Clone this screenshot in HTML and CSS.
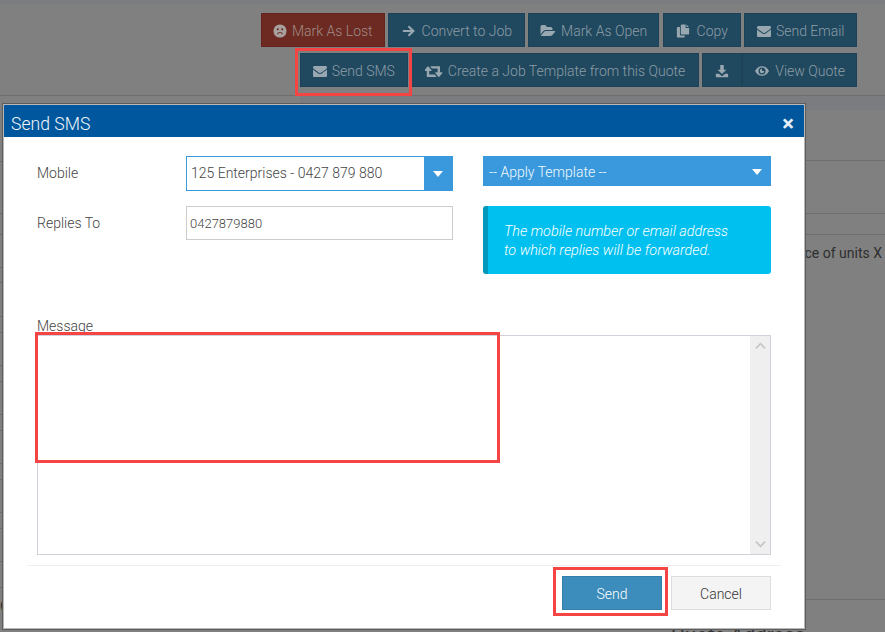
FILE: index.html
```html
<!DOCTYPE html>
<html lang="en">
<head>
<meta charset="utf-8">
<title>Send SMS</title>
<link rel="stylesheet" href="styles.css">
</head>
<body>
<svg class="defs" width="0" height="0" aria-hidden="true">
  <symbol id="i-env" viewBox="0 0 1792 1792"><path d="M1792 710v794q0 66-47 113t-113 47h-1472q-66 0-113-47t-47-113v-794q44 49 101 87 362 246 497 345 57 42 92.5 65.5t94.5 48 110 24.5h2q51 0 110-24.5t94.5-48 92.5-65.5q170-123 498-345 57-39 100-87zm0-294q0 79-49 151t-122 123q-376 261-468 325-10 7-42.5 30.5t-54 38-52 32.5-57.5 27-50 9h-2q-23 0-50-9t-57.5-27-52-32.5-54-38-42.5-30.5q-91-64-262-182.5t-205-142.5q-62-42-117-115.5t-55-136.5q0-78 41.5-130t118.5-52h1472q65 0 112.5 47t47.5 113z"/></symbol>
  <symbol id="i-folder" viewBox="0 0 1920 1792"><path d="M1879 952q0 31-31 66l-336 396q-43 51-120.5 86.5t-143.5 35.5h-1088q-34 0-60.5-13t-26.5-43q0-31 31-66l336-396q43-51 120.5-86.5t143.5-35.5h1088q34 0 60.5 13t26.5 43zm-343-344v160h-832q-94 0-197 47.5t-164 119.5l-337 396-5 6q0-4-.5-12.5t-.5-12.5v-960q0-92 66-158t158-66h320q92 0 158 66t66 158v32h544q92 0 158 66t66 158z"/></symbol>
</svg>

<div class="page">
  <div class="top-strip"></div>
  <div class="toolbar">
    <div class="btn-row">
      <a class="btn btn-red">
        <svg class="ic" viewBox="0 0 16 16"><path fill-rule="evenodd" d="M8 .5a7.500 7.500 0 1 1 0 15A7.500 7.500 0 0 1 8 .5zM5.500 4.800a1.200 1.200 0 1 0 0 2.400 1.200 1.200 0 0 0 0-2.400zm5 0a1.200 1.200 0 1 0 0 2.400 1.200 1.200 0 0 0 0-2.400zM4.600 11.300l1 .4C6.100 10.800 7 10.300 8 10.300s1.900.5 2.400 1.400l1-.4C10.800 10 9.500 9.200 8 9.200s-2.800.8-3.400 2.100z"/></svg>
        Mark As Lost</a>
      <a class="btn btn-convert">
        <svg class="ic ic-arrow" viewBox="0 0 16 16"><path d="M8.200 1.800 14.800 8l-6.600 6.200-1.600-1.600L10 9.200H1V6.800h9L6.600 3.400z"/></svg>
        Convert to Job</a>
      <a class="btn btn-open"><svg class="ic ic-wide"><use href="#i-folder"/></svg>Mark As Open</a>
      <a class="btn btn-copy">
        <svg class="ic" viewBox="0 0 16 16"><path d="M1 4.500a1 1 0 0 1 1-1h2.500V12a1 1 0 0 0 1 1H10v1.500a1 1 0 0 1-1 1H2a1 1 0 0 1-1-1zM5.500 1.500a1 1 0 0 1 1-1H11v4h4V11a1 1 0 0 1-1 1H6.500a1 1 0 0 1-1-1zM12 .7 14.800 3.500H12z"/></svg>
        Copy</a>
      <a class="btn btn-email"><svg class="ic"><use href="#i-env"/></svg>Send Email</a>
    </div>
    <div class="btn-row">
      <a class="btn"><svg class="ic"><use href="#i-env"/></svg>Send SMS</a>
      <a class="btn btn-template">
        <svg class="ic ic-retweet" viewBox="0 256 1920 1280"><path d="M1216 1504q0 13-9.500 22.500t-22.500 9.500h-960q-8 0-13.500-2t-9-7-5.500-8-3-11.500-1-11.500v-600h-192q-26 0-45-19t-19-45q0-24 15-41l320-384q19-22 49-22t49 22l320 384q15 17 15 41 0 26-19 45t-45 19h-192v384h576q16 0 25 11l160 192q7 10 7 21zm640-416q0 24-15 41l-320 384q-20 23-49 23t-49-23l-320-384q-15-17-15-41 0-26 19-45t45-19h192v-384h-576q-16 0-25-12l-160-192q-7-9-7-20 0-13 9.500-22.500t22.500-9.500h960q8 0 13.500 2t9 7 5.500 8.500 3 11.500 1 11v600h192q26 0 45 19t19 45z"/></svg>
        Create a Job Template from this Quote</a>
      <div class="btn-group">
        <a class="btn btn-icon">
          <svg class="ic" viewBox="0 0 16 16"><path d="M6 1h4v5.500h3L8 11.500 3 6.500h3zM1 11h3.500L8 14l3.500-3H15v4H1z"/></svg>
        </a>
        <a class="btn btn-view">
          <svg class="ic ic-wide" viewBox="0 0 16 16"><path fill-rule="evenodd" d="M8 2.500c3.400 0 6.300 2.200 8 5.500-1.700 3.300-4.600 5.500-8 5.500S1.700 11.300 0 8c1.700-3.300 4.600-5.500 8-5.500zm0 1.500a4 4 0 1 0 0 8 4 4 0 0 0 0-8zM8 5.500V8h2.500A2.500 2.500 0 1 1 8 5.500z"/></svg>
          View Quote</a>
      </div>
    </div>
  </div>

  <div class="content">
    <div class="left-table">
      <div class="rule r66"></div>
      <div class="rule r52"></div>
      <div class="rule r21"></div>
      <div class="rule r33"></div>
      <div class="rule r15"></div>
      <div class="rule r34"></div>
      <div class="rule r16"></div>
      <div class="rule r33"></div>
      <div class="rule r16"></div>
      <div class="rule r33"></div>
      <div class="rule r16"></div>
      <div class="rule r33"></div>
      <div class="rule r16"></div>
      <div class="rule r33"></div>
      <div class="rule r16"></div>
      <div class="rule r33"></div>
      <div class="rule r26"></div>
      <div class="left-note">C</div>
    </div>
    <div class="right-table">
      <div class="right-band"></div>
      <div class="rule r65"></div>
      <div class="rule r53"></div>
      <div class="rule r21"></div>
      <div class="units-row">Price of units X</div>
      <div class="rule r329"></div>
      <div class="quote-address">Quote Address</div>
    </div>
  </div>
</div>

<div class="modal">
  <div class="modal-head">
    <span class="modal-title">Send SMS</span>
    <span class="modal-close">×</span>
  </div>
  <div class="modal-body">
    <div class="form-grid">
      <div class="form-left">
        <div class="field">
          <label class="label">Mobile</label>
          <div class="select">
            <span class="select-text">125 Enterprises - 0427 879 880</span>
            <span class="select-arrow"><i class="caret"></i></span>
          </div>
        </div>
        <div class="field">
          <label class="label">Replies To</label>
          <input class="input" type="text" value="0427879880">
        </div>
      </div>
      <div class="form-right">
        <div class="template">
          <span>-- Apply Template --</span>
          <i class="caret"></i>
        </div>
        <div class="info">The mobile number or email address<br>to which replies will be forwarded.</div>
      </div>
    </div>
    <div class="msg-label">Message</div>
    <div class="textarea">
      <div class="scrollbar">
        <svg class="chev" viewBox="0 0 12 8"><path d="M1 6.500 6 1.500l5 5" /></svg>
        <svg class="chev" viewBox="0 0 12 8"><path d="M1 1.500l5 5 5-5" /></svg>
      </div>
    </div>
  </div>
  <div class="modal-foot">
    <button class="foot-btn foot-send">Send</button>
    <button class="foot-btn foot-cancel">Cancel</button>
  </div>
</div>

<div class="mark mark-sms"></div>
<div class="mark mark-msg"></div>
<div class="mark mark-send"></div>
</body>
</html>
```

FILE: styles.css
```css
* { box-sizing: border-box; }
html, body { margin: 0; height: 632px; overflow: hidden; }
body { background: #808080; font-family: Roboto, "Liberation Sans", sans-serif; font-size: 14px; font-weight: 300; color: #444; }
.defs { position: absolute; }
.page { height: 632px; overflow: hidden; display: flex; flex-direction: column; }
.top-strip { height: 4px; background: #7b7c80; flex: none; }

.toolbar { flex: none; height: 92px; padding: 9px 28px 0 0; border-bottom: 1px solid #6e6e70; display: flex; flex-direction: column; gap: 6px; align-items: flex-end; }
.btn-row { display: flex; gap: 3.500px; height: 34px; }
.btn { display: flex; align-items: center; gap: 5px; height: 34px; padding: 1px 12px 0; background: #20495f; border: 1px solid #1d4257; color: #8d9ca6; white-space: nowrap; font-size: 14px; }
.btn-red { background: #6c2a22; border-color: #64251e; color: #a08a86; padding: 1px 11px 0; }
.btn-convert { padding: 1px 11.500px 0; }
.btn-open { padding: 1px 11px 0; }
.btn-copy { gap: 7px; }
.btn-email { padding: 1px 11.500px 0; }
.btn-template { padding: 1px 12.500px 0; }
.btn-view { padding: 1px 11px 0; }
.btn-group { display: flex; }
.btn-icon { padding: 1px 12px 0; }
.ic { width: 14px; height: 14px; fill: #98a7b0; flex: none; }
.btn-red .ic { fill: #a8a09e; }
.ic-wide { width: 16px; }
.ic-arrow { width: 16px; }
.ic-retweet { width: 18px; height: 12px; }

.content { flex: 1; display: flex; }
.left-table { width: 300px; }
.right-table { flex: 1; display: flex; flex-direction: column; }
.right-band { height: 14px; background: #7b7c80; margin-bottom: -14px; flex: none; }
.rule { border-bottom: 1px solid #6d6d6d; flex: none; }
.r15 { height: 15px; } .r16 { height: 16px; } .r21 { height: 21px; } .r26 { height: 26px; }
.r33 { height: 33px; } .r34 { height: 34px; } .r52 { height: 52px; } .r53 { height: 53px; }
.r65 { height: 65px; } .r66 { height: 66px; } .r329 { height: 329px; }
.left-note { margin-top: 10px; font-size: 14px; font-weight: 400; color: #333; line-height: 16px; }
.units-row { flex: none; height: 36px; line-height: 36px; text-align: right; padding-right: 3px; white-space: nowrap; color: #2e2e2e; font-weight: 400; }
.quote-address { flex: none; margin-top: 23px; padding-left: 371px; font-size: 20.400px; font-weight: 400; line-height: 24px; color: #333; white-space: nowrap; }

.modal { position: absolute; left: 3px; top: 104px; width: 802px; height: 525px; background: #fff; border: 1px solid #b8b8b8; outline: 1px solid #5c5c5c; display: flex; flex-direction: column; }
.modal-head { flex: none; height: 32px; background: #00579d; display: flex; align-items: center; justify-content: space-between; padding: 5px 10px 0 7px; color: #fff; }
.modal-title { font-size: 17.600px; font-weight: 300; color: #f2f7fb; }
.modal-close { font-size: 22px; font-weight: 700; line-height: 22px; color: #e6f0f8; }
.modal-body { padding: 19px 33px 0; }
.form-grid { display: grid; grid-template-columns: 416px 288px; column-gap: 30px; height: 118px; }
.form-left { display: flex; flex-direction: column; gap: 15px; }
.form-right { display: flex; flex-direction: column; gap: 20px; }
.field { display: grid; grid-template-columns: 149px 267px; align-items: start; }
.label { line-height: 34px; }
.select { height: 35px; display: flex; border: 1px solid #3a99dc; }
.select-text { flex: 1; line-height: 33px; padding-left: 4px; white-space: nowrap; }
.select-arrow { width: 28px; background: #3a99dc; display: flex; align-items: center; justify-content: center; }
.caret { width: 0; height: 0; border-left: 5px solid transparent; border-right: 5px solid transparent; border-top: 6px solid #fff; display: block; }
.input { height: 34px; width: 267px; border: 1px solid #ccc; padding: 0 3px; font: 300 13px Roboto, "Liberation Sans", sans-serif; color: #444; outline: none; background: #fff; }
.template { height: 30px; background: #3a99dc; color: #f4f9fd; display: flex; align-items: center; justify-content: space-between; padding: 2px 9px 0 6px; }
.info { height: 68px; background: #00c0ef; border-left: 5px solid #0097bc; border-radius: 3px; color: #fff; font-style: italic; font-size: 14.400px; font-weight: 300; padding: 16px 0 0 16px; line-height: 19px; }
.msg-label { margin-top: 44px; line-height: 16px; height: 17px; }
.textarea { height: 220px; border: 1px solid #d2d2dc; display: flex; justify-content: flex-end; background: #fff; }
.scrollbar { width: 20px; background: #efefef; display: flex; flex-direction: column; justify-content: space-between; align-items: center; padding: 6px 0; }
.chev { width: 11px; height: 8px; fill: none; stroke: #c6c6c6; stroke-width: 2; }
.modal-foot { margin: 10px 23px 0; border-top: 1px solid #eee; padding: 10px 10px 0 0; display: flex; justify-content: flex-end; gap: 9px; }
.foot-btn { width: 100px; height: 34px; font: 300 14px Roboto, "Liberation Sans", sans-serif; padding: 2px 0 0; }
.foot-send { background: #3c8dbc; border: 1px solid #367fa9; color: #fff; }
.foot-cancel { background: #f4f4f4; border: 1px solid #ddd; color: #333; }

.mark { position: absolute; border: 3px solid #f44444; }
.mark-sms { left: 295px; top: 48px; width: 117px; height: 48px; }
.mark-msg { left: 35px; top: 332px; width: 465px; height: 131px; }
.mark-send { left: 553px; top: 567px; width: 115px; height: 49px; }
```
